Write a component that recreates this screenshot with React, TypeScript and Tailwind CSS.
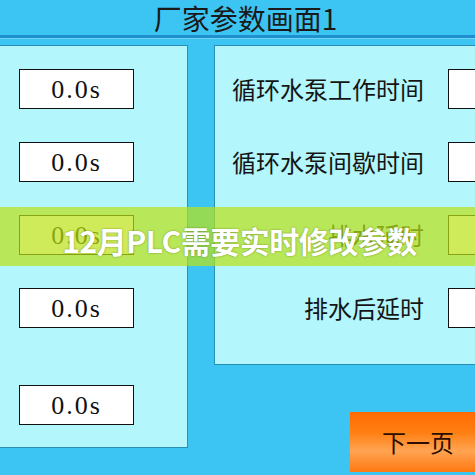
import React from "react";

const cjk = { fontFamily: '"Noto Sans CJK SC", "Noto Sans", sans-serif' };
const serif = { fontFamily: '"Liberation Serif", "Noto Sans CJK SC", serif' };

function ValueBox({ value = "0.0s" }: { value?: string }) {
	return (
		<div
			className="w-[115px] h-[40px] shrink-0 bg-white border border-[#111] flex items-center justify-center text-[26px] tracking-[2px] text-[#111]"
			style={serif}
		>
			{value}
		</div>
	);
}

function ParamRow({ label }: { label: string }) {
	return (
		<div className="flex items-center h-[40px]">
			<div
				className="w-[209px] shrink-0 text-right text-[24px] leading-none text-[#151515]"
				style={cjk}
			>
				{label}
			</div>
			<div className="ml-[24px]">
				<ValueBox />
			</div>
		</div>
	);
}

export default function App() {
	return (
		<div className="relative w-[475px] h-[475px] overflow-hidden bg-[#3cc5f2]">
			{/* title bar */}
			<div className="h-[35px] flex items-center justify-center">
				<span
					className="text-[28px] leading-none text-[#1a1a1a] pl-[16px]"
					style={cjk}
				>
					厂家参数画面1
				</span>
			</div>
			<div className="h-[3px] bg-[#1f8fcf]" />
			<div className="h-[1px] bg-[#6fd4f6]" />

			{/* body */}
			<div className="flex mt-[6px]">
				<div className="w-[188px] h-[403px] shrink-0 bg-[#b3f6fc] border-r border-b border-t border-[#2a8fb4] flex flex-col pl-[19px] pt-[23px]">
					<div className="flex flex-col gap-[33px]">
						<ValueBox />
						<ValueBox />
						<ValueBox />
						<ValueBox />
					</div>
					<div className="mt-[57px]">
						<ValueBox />
					</div>
				</div>

				<div className="ml-[26px] flex flex-col">
					<div className="w-[320px] h-[320px] bg-[#b3f6fc] border-l border-t border-b border-[#2a8fb4] flex flex-col gap-[33px] pt-[23px]">
						<ParamRow label="循环水泵工作时间" />
						<ParamRow label="循环水泵间歇时间" />
						<ParamRow label="排水延时" />
						<ParamRow label="排水后延时" />
					</div>
					<button
						className="mt-[47px] ml-[136px] w-[136px] h-[60px] shrink-0 flex items-center justify-center text-[24px] text-[#2a0e00] bg-[linear-gradient(180deg,#ff6a00_0%,#ff8014_35%,#ffa452_65%,#ff7810_100%)]"
						style={cjk}
					>
						下一页
					</button>
				</div>
			</div>

			{/* caption strip */}
			<div className="absolute left-0 right-0 top-[207px] h-[59px] bg-[rgba(186,226,20,0.7)] flex items-center justify-center">
				<span
					className="text-[30px] font-bold text-white leading-none tracking-[-0.5px] [text-shadow:0_0_2px_rgba(60,80,0,0.6)] ml-[4px] mt-[6px]"
					style={cjk}
				>
					12月PLC需要实时修改参数
				</span>
			</div>
		</div>
	);
}
